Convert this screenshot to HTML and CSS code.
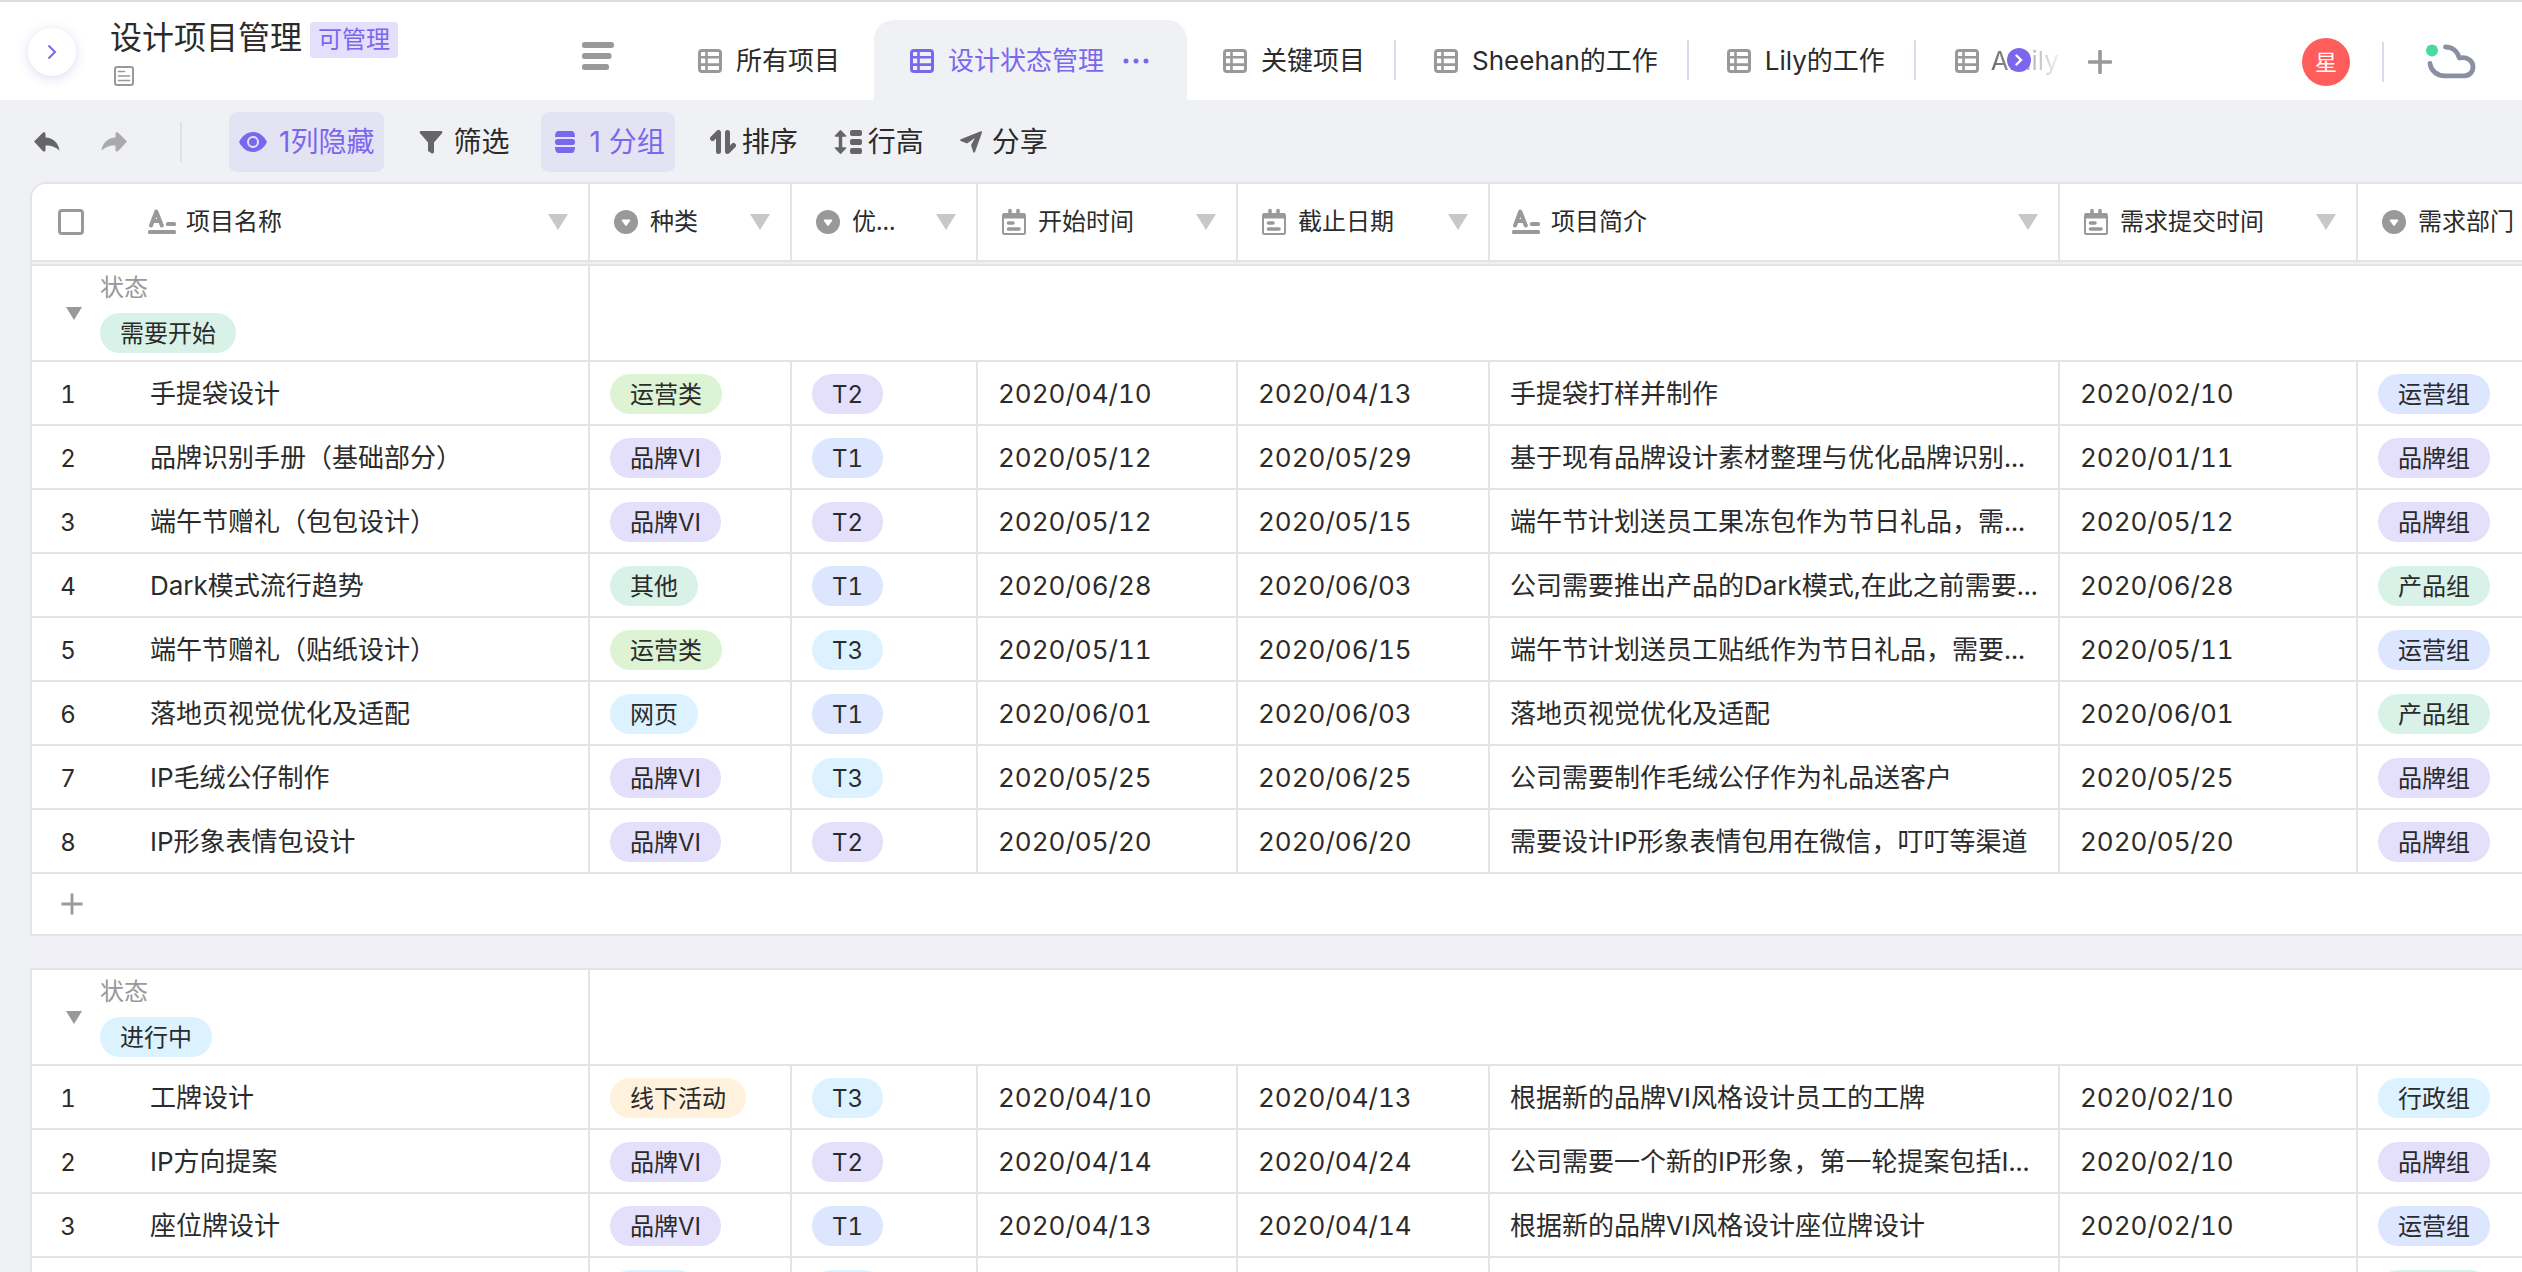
FILE: index.html
```html
<!DOCTYPE html>
<html lang="zh-CN">
<head>
<meta charset="utf-8">
<meta name="viewport" content="width=device-width, initial-scale=1">
<title>设计项目管理</title>
<link rel="stylesheet" href="styles.css">
</head>
<body>
<svg class="sprite" aria-hidden="true">
  <symbol id="i-grid" viewBox="0 0 24 24"><rect x="1.5" y="1.5" width="21" height="21" rx="2.5" fill="none" stroke="currentColor" stroke-width="3"/><path d="M8.5 1v22M1 8.2h22M1 15.6h22" stroke="currentColor" stroke-width="2.6" fill="none"/></symbol>
  <symbol id="i-text" viewBox="0 0 28 26"><path d="M3 16.5 8.3 2.500 13.800 16.500M5 12h7" fill="none" stroke="currentColor" stroke-width="4" stroke-linecap="round" stroke-linejoin="round"/><rect x="18" y="13" width="10" height="4" rx="1.500" fill="currentColor"/><rect x="0" y="21" width="28" height="4" rx="1.500" fill="currentColor"/></symbol>
  <symbol id="i-select" viewBox="0 0 24 24"><circle cx="12" cy="12" r="12" fill="currentColor"/><path d="M8.500 9.500h7a.8.8 0 0 1 .7 1.200L12.700 15.500a.9.9 0 0 1-1.400 0L7.800 10.700a.8.8 0 0 1 .7-1.200z" fill="#fff"/></symbol>
  <symbol id="i-date" viewBox="0 0 24 26"><path d="M8 1.500v4M16 1.500v4" stroke="currentColor" stroke-width="3.500" stroke-linecap="round"/><rect x="1" y="5" width="22" height="20" rx="1.500" fill="none" stroke="currentColor" stroke-width="2"/><path d="M1 4.500h22v5H1z" fill="currentColor"/><path d="M6.500 14h4.500M6.500 20h10.500" stroke="currentColor" stroke-width="3.600" stroke-linecap="round"/></symbol>
  <symbol id="i-caret" viewBox="0 0 20 16"><path d="M0 0h20L10 16z" fill="currentColor"/></symbol>
  <symbol id="i-undo" viewBox="0 0 26 20"><path d="M0 9.500 9 0.500q2.500-1 2.500 1.300V5.500C19 6 24.500 10.500 25.500 18.500 21 14.500 17 13.200 11.500 13.500v4.700q0 2-2.500 1z" fill="currentColor"/></symbol>
  <symbol id="i-plus" viewBox="0 0 24 24"><path d="M12 1.500v21M1.500 12h21" stroke="currentColor" stroke-width="3.600" stroke-linecap="round"/></symbol>
</svg>

<div class="app">
  <header class="topbar">
    <button class="expand" type="button" aria-label="展开侧栏"><svg width="10" height="16" viewBox="0 0 10 16"><path d="M1.500 1.500 8 8l-6.500 6.500" fill="none" stroke="currentColor" stroke-width="2"/></svg></button>
    <div class="doc">
      <div class="doc-line"><h1 class="doc-title">设计项目管理</h1><span class="role">可管理</span></div>
      <svg class="doc-note" width="20" height="20" viewBox="0 0 20 20"><rect x="1" y="1" width="18" height="18" rx="2" fill="none" stroke="currentColor" stroke-width="2"/><path d="M4.500 5.500h6M4.500 10h11M4.500 14.500h11" stroke="currentColor" stroke-width="1.600" stroke-linecap="round"/></svg>
    </div>
    <button class="views" type="button" aria-label="视图列表"><svg width="32" height="28" viewBox="0 0 32 28"><rect width="32" height="6" rx="2.500" fill="currentColor"/><rect y="11" width="29.500" height="6" rx="2.500" fill="currentColor"/><rect y="22" width="27" height="6" rx="2.500" fill="currentColor"/></svg></button>

    <nav class="tabs" aria-label="视图">
      <a class="tab" href="#all"><svg class="ic24"><use href="#i-grid"/></svg>所有项目</a>
      <a class="tab tab-active" href="#status" aria-current="page"><svg class="ic24"><use href="#i-grid"/></svg>设计状态管理<svg class="tab-more" width="26" height="6" viewBox="0 0 26 6"><circle cx="3" cy="3" r="2.500" fill="currentColor"/><circle cx="13" cy="3" r="2.500" fill="currentColor"/><circle cx="23" cy="3" r="2.500" fill="currentColor"/></svg></a>
      <a class="tab tab-ruled" href="#key"><svg class="ic24"><use href="#i-grid"/></svg>关键项目</a>
      <a class="tab tab-ruled" href="#sheehan"><svg class="ic24"><use href="#i-grid"/></svg>Sheehan的工作</a>
      <a class="tab tab-ruled" href="#lily"><svg class="ic24"><use href="#i-grid"/></svg>Lily的工作</a>
      <div class="tab-last">
        <a class="tab tab-fade" href="#amily"><svg class="ic24"><use href="#i-grid"/></svg><span class="fade">Amily的</span></a>
        <button class="tab-next" type="button" aria-label="更多视图"><svg width="8" height="12" viewBox="0 0 8 12"><path d="M1.500 1.500 6 6l-4.500 4.500" fill="none" stroke="#fff" stroke-width="2.400" stroke-linecap="round"/></svg></button>
      </div>
    </nav>
    <button class="tab-add" type="button" aria-label="新建视图"><svg class="ic24"><use href="#i-plus"/></svg></button>

    <div class="account">
      <span class="avatar">星</span>
      <span class="rule"></span>
      <svg class="cloud" width="50" height="36" viewBox="0 0 50 36"><circle cx="6" cy="6.500" r="6" fill="#4bd9a1"/><path d="M19.500 3c7 0 12 4.300 13.800 11 7.500-1.700 13.700 2.500 13.700 9 0 5-3.700 8.800-8.700 8.800H18.500C11 31.800 5 27 4 19.500" fill="none" stroke="#8b8fa3" stroke-width="4.800" stroke-linecap="round" stroke-linejoin="round"/></svg>
    </div>
  </header>

  <div class="toolbar">
    <button class="hist" type="button" aria-label="撤销"><svg width="26" height="20"><use href="#i-undo"/></svg></button>
    <button class="hist hist-redo" type="button" aria-label="重做"><svg width="26" height="20"><use href="#i-undo"/></svg></button>
    <span class="rule rule-tool"></span>
    <button class="tool tool-on tool-hide" type="button"><svg width="28" height="20" viewBox="0 0 28 20"><path d="M0 10C3 4 8 0 14 0s11 4 14 10c-3 6-8 10-14 10S3 16 0 10z" fill="currentColor"/><circle cx="14" cy="10" r="5" fill="none" stroke="#e4e3f3" stroke-width="2"/></svg>1列隐藏</button>
    <button class="tool tool-filter" type="button"><svg width="24" height="24" viewBox="0 0 24 24"><path d="M1.500 1h21q1.500.5 .5 2.200L15 12.500V22q-.5 2.500-3 1L9 21v-8.500L1 3.200Q0 1.500 1.500 1z" fill="currentColor"/></svg>筛选</button>
    <button class="tool tool-on tool-group" type="button"><svg width="20" height="22" viewBox="0 0 20 22"><path d="M3 0h14q3 .5 3 6H0q0-5.500 3-6zM0 16h20q0 5.500-3 6H3q-3-.5-3-6z" fill="currentColor"/><rect y="8" width="20" height="6" rx="2.500" fill="currentColor"/></svg>1 分组</button>
    <button class="tool tool-tight" type="button"><svg width="26" height="24" viewBox="0 0 26 24"><path d="M2.500 8.500 8.500 2.500V21.500M17.500 2.500v19L23.500 15.500" fill="none" stroke="currentColor" stroke-width="5" stroke-linecap="round" stroke-linejoin="round"/></svg>排序</button>
    <button class="tool tool-tight" type="button"><svg width="28" height="24" viewBox="0 0 28 24"><path d="M6.500 4v16" stroke="currentColor" stroke-width="3.500"/><path d="M6.500 .8 11.500 6h-10zM6.500 23.200 11.500 18h-10z" fill="currentColor" stroke="currentColor" stroke-width="1.500" stroke-linejoin="round"/><rect x="16" y="0" width="12" height="6" rx="2" fill="currentColor"/><rect x="16" y="9" width="12" height="6" rx="2" fill="currentColor"/><rect x="16" y="18" width="12" height="6" rx="2" fill="currentColor"/></svg>行高</button>
    <button class="tool" type="button"><svg width="22" height="22" viewBox="0 0 22 22"><path d="M20.800 .2q1.400-.2 1.200 1.200L15 21q-1 1.300-1.800 0L11 14 15 7 7 12.500 .7 10q-1-.8 0-1.700z" fill="currentColor"/></svg>分享</button>
  </div>

  <main class="sheet">
    <table class="grid">
      <colgroup><col class="c-name"><col class="c-kind"><col class="c-prio"><col class="c-start"><col class="c-end"><col class="c-desc"><col class="c-ask"><col class="c-dept"></colgroup>
      <thead>
        <tr>
          <th scope="col"><div class="head head-name"><input class="check" type="checkbox" aria-label="全选"><svg class="ic-text"><use href="#i-text"/></svg>项目名称<svg class="caret"><use href="#i-caret"/></svg></div></th>
          <th scope="col"><div class="head"><svg class="ic24"><use href="#i-select"/></svg>种类<svg class="caret"><use href="#i-caret"/></svg></div></th>
          <th scope="col"><div class="head"><svg class="ic24"><use href="#i-select"/></svg>优...<svg class="caret"><use href="#i-caret"/></svg></div></th>
          <th scope="col"><div class="head"><svg class="ic-date"><use href="#i-date"/></svg>开始时间<svg class="caret"><use href="#i-caret"/></svg></div></th>
          <th scope="col"><div class="head"><svg class="ic-date"><use href="#i-date"/></svg>截止日期<svg class="caret"><use href="#i-caret"/></svg></div></th>
          <th scope="col"><div class="head head-desc"><svg class="ic-text"><use href="#i-text"/></svg>项目简介<svg class="caret"><use href="#i-caret"/></svg></div></th>
          <th scope="col"><div class="head"><svg class="ic-date"><use href="#i-date"/></svg>需求提交时间<svg class="caret"><use href="#i-caret"/></svg></div></th>
          <th scope="col"><div class="head"><svg class="ic24"><use href="#i-select"/></svg>需求部门</div></th>
        </tr>
      </thead>
      <tbody>
        <tr class="seam"><td colspan="8"></td></tr>
        <tr class="group">
          <td><div class="group-head"><button class="fold" type="button" aria-label="折叠"><svg width="16" height="13"><use href="#i-caret"/></svg></button><div class="group-info"><span class="group-label">状态</span><span class="pill mint">需要开始</span></div></div></td>
          <td colspan="7"></td>
        </tr>
        <tr><td class="name"><span class="num">1</span>手提袋设计</td><td><span class="pill green">运营类</span></td><td><span class="pill violet">T2</span></td><td>2020/04/10</td><td>2020/04/13</td><td>手提袋打样并制作</td><td>2020/02/10</td><td><span class="pill blue">运营组</span></td></tr>
        <tr><td class="name"><span class="num">2</span>品牌识别手册（基础部分）</td><td><span class="pill violet">品牌VI</span></td><td><span class="pill blue">T1</span></td><td>2020/05/12</td><td>2020/05/29</td><td>基于现有品牌设计素材整理与优化品牌识别...</td><td>2020/01/11</td><td><span class="pill violet">品牌组</span></td></tr>
        <tr><td class="name"><span class="num">3</span>端午节赠礼（包包设计）</td><td><span class="pill violet">品牌VI</span></td><td><span class="pill violet">T2</span></td><td>2020/05/12</td><td>2020/05/15</td><td>端午节计划送员工果冻包作为节日礼品，需...</td><td>2020/05/12</td><td><span class="pill violet">品牌组</span></td></tr>
        <tr><td class="name"><span class="num">4</span>Dark模式流行趋势</td><td><span class="pill mint">其他</span></td><td><span class="pill blue">T1</span></td><td>2020/06/28</td><td>2020/06/03</td><td>公司需要推出产品的Dark模式,在此之前需要...</td><td>2020/06/28</td><td><span class="pill mint">产品组</span></td></tr>
        <tr><td class="name"><span class="num">5</span>端午节赠礼（贴纸设计）</td><td><span class="pill green">运营类</span></td><td><span class="pill sky">T3</span></td><td>2020/05/11</td><td>2020/06/15</td><td>端午节计划送员工贴纸作为节日礼品，需要...</td><td>2020/05/11</td><td><span class="pill blue">运营组</span></td></tr>
        <tr><td class="name"><span class="num">6</span>落地页视觉优化及适配</td><td><span class="pill sky">网页</span></td><td><span class="pill blue">T1</span></td><td>2020/06/01</td><td>2020/06/03</td><td>落地页视觉优化及适配</td><td>2020/06/01</td><td><span class="pill mint">产品组</span></td></tr>
        <tr><td class="name"><span class="num">7</span>IP毛绒公仔制作</td><td><span class="pill violet">品牌VI</span></td><td><span class="pill sky">T3</span></td><td>2020/05/25</td><td>2020/06/25</td><td>公司需要制作毛绒公仔作为礼品送客户</td><td>2020/05/25</td><td><span class="pill violet">品牌组</span></td></tr>
        <tr><td class="name"><span class="num">8</span>IP形象表情包设计</td><td><span class="pill violet">品牌VI</span></td><td><span class="pill violet">T2</span></td><td>2020/05/20</td><td>2020/06/20</td><td>需要设计IP形象表情包用在微信，叮叮等渠道</td><td>2020/05/20</td><td><span class="pill violet">品牌组</span></td></tr>
        <tr class="add"><td colspan="8"><button class="row-add" type="button" aria-label="新增记录"><svg width="22" height="22" viewBox="0 0 22 22"><path d="M11 .5v21M.5 11h21" stroke="currentColor" stroke-width="2.800"/></svg></button></td></tr>
      </tbody>
      <tbody>
        <tr class="gap"><td colspan="8"></td></tr>
        <tr class="group">
          <td><div class="group-head"><button class="fold" type="button" aria-label="折叠"><svg width="16" height="13"><use href="#i-caret"/></svg></button><div class="group-info"><span class="group-label">状态</span><span class="pill sky">进行中</span></div></div></td>
          <td colspan="7"></td>
        </tr>
        <tr><td class="name"><span class="num">1</span>工牌设计</td><td><span class="pill orange">线下活动</span></td><td><span class="pill sky">T3</span></td><td>2020/04/10</td><td>2020/04/13</td><td>根据新的品牌VI风格设计员工的工牌</td><td>2020/02/10</td><td><span class="pill sky">行政组</span></td></tr>
        <tr><td class="name"><span class="num">2</span>IP方向提案</td><td><span class="pill violet">品牌VI</span></td><td><span class="pill violet">T2</span></td><td>2020/04/14</td><td>2020/04/24</td><td>公司需要一个新的IP形象，第一轮提案包括I...</td><td>2020/02/10</td><td><span class="pill violet">品牌组</span></td></tr>
        <tr><td class="name"><span class="num">3</span>座位牌设计</td><td><span class="pill violet">品牌VI</span></td><td><span class="pill blue">T1</span></td><td>2020/04/13</td><td>2020/04/14</td><td>根据新的品牌VI风格设计座位牌设计</td><td>2020/02/10</td><td><span class="pill blue">运营组</span></td></tr>
        <tr><td class="name"></td><td><span class="pill sky">网页</span></td><td><span class="pill sky">T3</span></td><td></td><td></td><td></td><td></td><td><span class="pill mint">产品组</span></td></tr>
      </tbody>
    </table>
  </main>
</div>
</body>
</html>
```
FILE: styles.css
```css
:root {
  --ink: #2b2b2b;
  --muted: #999;
  --accent: #7b67ee;
  --line: #e4e4e6;
  --page: #f0f1f4;
}

* { box-sizing: border-box; }

body {
  margin: 0;
  background: var(--page);
  color: var(--ink);
  font-family: Inter, "Noto Sans CJK SC", sans-serif;
  font-size: 26px;
  line-height: 40px;
}

button {
  border: 0;
  padding: 0;
  background: none;
  color: inherit;
  font: inherit;
  cursor: pointer;
}

a { color: inherit; text-decoration: none; }
svg { display: block; flex: none; }
.sprite { position: absolute; width: 0; height: 0; }
.ic24 { width: 24px; height: 24px; color: var(--muted); }

.app {
  display: flex;
  flex-direction: column;
  height: 100vh;
  overflow: hidden;
}

/* top bar */
.topbar {
  display: flex;
  flex: none;
  height: 100px;
  padding-left: 28px;
  border-top: 2px solid #dcdce2;
  background: #fff;
}

.expand {
  display: flex;
  align-items: center;
  justify-content: center;
  flex: none;
  width: 48px;
  height: 48px;
  margin-top: 26px;
  border-radius: 50%;
  background: #fff;
  box-shadow: 0 2px 12px rgba(90, 90, 200, .22);
  color: var(--accent);
}

.doc { flex: none; width: 506px; padding: 14px 0 0 34px; }
.doc-line { display: flex; align-items: center; gap: 8px; height: 48px; }
.doc-title { margin: 0; font-size: 32px; font-weight: 400; line-height: 44px; padding-bottom: 4px; }
.role {
  height: 36px;
  padding: 0 8px;
  border-radius: 4px;
  background: #e4dffc;
  color: var(--accent);
  font-size: 24px;
  line-height: 36px;
}
.doc-note { margin: 2px 0 0 4px; color: var(--muted); }

.views { align-self: flex-start; margin-top: 40px; color: var(--muted); }

.tabs { display: flex; flex: none; height: 98px; margin-left: 48px; padding-top: 18px; }
.tab {
  position: relative;
  display: flex;
  align-items: center;
  gap: 14px;
  height: 80px;
  padding: 2px 34px 0 36px;
}
.tab-active {
  padding-right: 38px;
  border-radius: 20px 20px 0 0;
  background: var(--page);
  color: var(--accent);
}
.tab-active .ic24 { color: inherit; }
.tab-more { margin-left: 5px; }
.tab-ruled { padding-right: 31px; }
.tab-ruled + .tab-ruled { padding-left: 38px; }
.tab-ruled::after {
  content: "";
  position: absolute;
  top: 20px;
  right: 0;
  width: 2px;
  height: 40px;
  background: #d9dbe8;
}
.tab-last { position: relative; width: 143px; overflow: hidden; }
.tab-fade { gap: 12px; padding-left: 39px; }
.fade {
  flex: none;
  -webkit-mask-image: linear-gradient(90deg, rgba(0, 0, 0, .7), transparent 76px);
  mask-image: linear-gradient(90deg, rgba(0, 0, 0, .7), transparent 76px);
}
.tab-next {
  position: absolute;
  top: 28px;
  right: 28px;
  display: flex;
  align-items: center;
  justify-content: center;
  width: 24px;
  height: 24px;
  border-radius: 50%;
  background: var(--accent);
}
.tab-add { height: 80px; margin: 20px 0 0 29px; }

.account {
  display: flex;
  align-items: center;
  gap: 32px;
  height: 48px;
  margin: 36px 46px 0 auto;
}
.avatar {
  width: 48px;
  height: 48px;
  border-radius: 50%;
  background: #ff5c5c;
  color: #fff;
  font-size: 22px;
  line-height: 48px;
  text-align: center;
}
.rule { flex: none; width: 2px; height: 40px; background: #d9dbe8; }
.cloud { margin-left: 10px; }

/* toolbar */
.toolbar {
  display: flex;
  flex: none;
  align-items: center;
  height: 82px;
  padding: 2px 0 0 34px;
  color: var(--ink);
  font-size: 28px;
}
.hist { margin-right: 41px; color: #666; }
.hist-redo { color: #aaa; }
.hist-redo svg { transform: scaleX(-1); }
.rule-tool { margin: 0 47px 0 12px; background: #e1e2e8; }
.tool {
  display: flex;
  align-items: center;
  gap: 10px;
  height: 60px;
  margin-right: 38px;
}
.tool svg { color: #666; }
.tool-on {
  margin-right: 35px;
  padding: 0 10px;
  border-radius: 8px;
  background: #e4e3f3;
  color: var(--accent);
}
.tool-on svg { color: inherit; }
.tool-hide { gap: 12px; }
.tool-filter { margin-right: 32px; }
.tool-group { gap: 14px; padding-left: 14px; }
.tool-tight { gap: 6px; margin-right: 36px; }

/* grid */
.sheet { flex: 1; min-height: 0; margin-left: 30px; overflow: hidden; }
.grid {
  width: 2630px;
  border-spacing: 0;
  table-layout: fixed;
  font-variant-numeric: tabular-nums;
}
.c-name { width: 560px; }
.c-kind { width: 202px; }
.c-prio { width: 186px; }
.c-start { width: 260px; }
.c-end { width: 252px; }
.c-desc { width: 570px; }
.c-ask { width: 298px; }

th, td {
  height: 64px;
  padding: 2px 20px 0;
  border-right: 2px solid var(--line);
  border-bottom: 2px solid var(--line);
  background: #fff;
  font-weight: 400;
  text-align: left;
  vertical-align: middle;
  white-space: nowrap;
}
th:first-child, td:first-child { border-left: 2px solid var(--line); }

th { height: 80px; padding: 0; border-top: 2px solid var(--line); font-size: 24px; }
th:first-child { border-top-left-radius: 16px; }
.head { display: flex; align-items: center; gap: 12px; padding: 0 20px 0 24px; }
.head-name { gap: 10px; padding-left: 26px; }
.head-desc { gap: 11px; padding-left: 22px; }
.ic-text { width: 28px; height: 26px; color: var(--muted); }
.ic-date { width: 24px; height: 26px; color: var(--muted); }
.caret { width: 20px; height: 16px; margin-left: auto; color: #c8c8c8; }
.check {
  width: 26px;
  height: 26px;
  margin: 0 54px 0 0;
  border: 3px solid var(--muted);
  border-radius: 4px;
  background: #fff;
  appearance: none;
}

.seam td { height: 2px; padding: 0; border-block: 0; background: #f0eff6; }
.gap td { height: 32px; padding: 0; border: 0; background: #f0eff6; }
.group td { height: 98px; padding: 0; border-top: 2px solid var(--line); }
.group-head { display: flex; align-items: center; padding-left: 34px; }
.fold { margin-right: 18px; color: var(--muted); }
.group-info { display: flex; flex-direction: column; align-items: flex-start; gap: 10px; }
.group-label { color: var(--muted); font-size: 24px; line-height: 30px; }

.name { padding-left: 28px; }
.num { display: inline-block; width: 16px; margin-right: 74px; font-size: 24px; text-align: center; }

.add td { height: 62px; padding: 0 0 0 29px; }
.row-add { display: block; color: var(--muted); }

.pill {
  display: block;
  width: fit-content;
  height: 40px;
  padding: 0 20px;
  border-radius: 20px;
  font-size: 24px;
  line-height: 42px;
}
.mint { background: #d8f2e8; }
.green { background: #dcf3d4; }
.violet { background: #e4e0fc; }
.blue { background: #dde6ff; }
.sky { background: #dcf3ff; }
.orange { background: #fff1dc; }
```
